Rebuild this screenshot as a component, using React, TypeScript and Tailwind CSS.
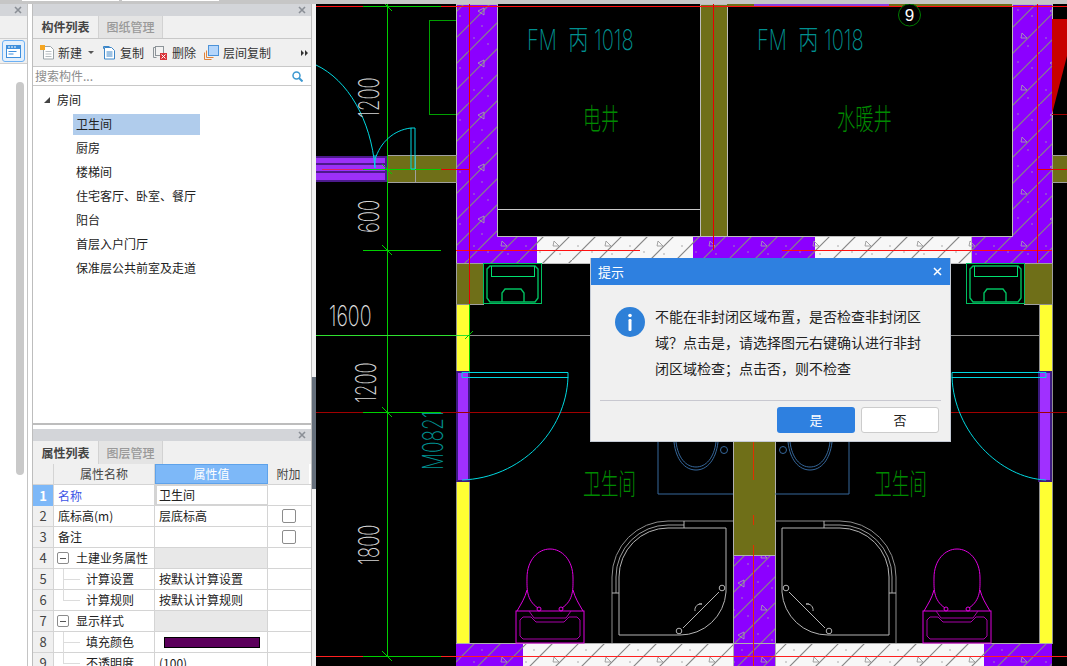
const uiFont = "font-['Noto_Sans_CJK_SC','Liberation_Sans',sans-serif]"

const treeItems = ['卫生间', '厨房', '楼梯间', '住宅客厅、卧室、餐厅', '阳台', '首层入户门厅', '保准层公共前室及走道']

function CloseX() {
  return (
    <svg width="8" height="8" viewBox="0 0 8 8" className="shrink-0">
      <path d="M1 1l6 6M7 1L1 7" stroke="#8a8f96" strokeWidth="1.6" fill="none" />
    </svg>
  )
}

function PanelBar() {
  return (
    <div className="h-[12px] bg-[#d3d5d9] flex items-center justify-end pr-[5px] shrink-0">
      <CloseX />
    </div>
  )
}

function NewIcon() {
  return (
    <svg width="16" height="15" viewBox="0 0 16 15" className="shrink-0">
      <path d="M3.5 1.5h7l3 3v9.5h-10z" fill="#fff" stroke="#9aa3a8" />
      <path d="M5.5 6.5h6M5.5 9h6M5.5 11.5h6" stroke="#b8bec2" />
      <rect x="0" y="0" width="5" height="5" fill="#f5a623" />
    </svg>
  )
}

function CopyIcon() {
  return (
    <svg width="14" height="15" viewBox="0 0 14 15" className="shrink-0">
      <path d="M1.5 3.5h2M1.5 3.5v-2h6" stroke="#3c86c8" fill="none" />
      <path d="M2.5 2.5h7l3 3v8.5h-10z" fill="#fff" stroke="#3c86c8" />
      <path d="M4.5 7h6M4.5 9h6M4.5 11h6" stroke="#3c86c8" />
    </svg>
  )
}

function DeleteIcon() {
  return (
    <svg width="14" height="14" viewBox="0 0 14 14" className="shrink-0">
      <path d="M3.5 1.5h-3v10h3" fill="none" stroke="#8d9499" />
      <rect x="2.5" y="0.5" width="8" height="9" fill="#f2f2f2" stroke="#8d9499" />
      <rect x="7" y="7" width="7" height="7" fill="#d9343a" />
      <path d="M8.5 8.5l4 4M12.5 8.5l-4 4" stroke="#fff" />
    </svg>
  )
}

function FloorCopyIcon() {
  return (
    <svg width="15" height="15" viewBox="0 0 15 15" className="shrink-0">
      <path d="M0.5 7.5v7h7" fill="none" stroke="#e0833a" />
      <path d="M2.5 5.5v7h7" fill="none" stroke="#e0833a" />
      <rect x="4.5" y="0.5" width="10" height="10" fill="#b5d6fb" stroke="#4d93d8" />
    </svg>
  )
}

function LeftStrip() {
  return (
    <div className="w-[28px] shrink-0 flex flex-col bg-white border-r border-[#c4c4c4] relative">
      <PanelBar />
      <div className="h-[23px] bg-[#f0f0f0] border-b border-[#cfcfcf] shrink-0" />
      <div className="h-[25px] bg-[#f0f0f0] border-b border-[#cfcfcf] shrink-0 flex items-center justify-end pr-[2px]">
        <div className="w-[23px] h-[22px] rounded-[3px] border border-[#6cb0f4] bg-[#e4f0fc] flex items-center justify-center">
          <svg width="15" height="13" viewBox="0 0 15 13">
            <rect x="0" y="0" width="15" height="13" fill="#3f8fdc" />
            <rect x="1" y="4" width="13" height="8" fill="#fff" />
            <path d="M2 2h2M5 2h2M8 2h2" stroke="#fff" />
            <path d="M2.5 6.5h8M2.5 9h5" stroke="#3f8fdc" />
          </svg>
        </div>
      </div>
      <div className="mt-[18px] ml-[16px] w-[8px] h-[393px] rounded-[4px] bg-[#c9c9c9]" />
    </div>
  )
}

function ComponentPanel() {
  return (
    <div className="h-[421px] flex flex-col shrink-0 border-b-2 border-[#bdbdbd]">
      <PanelBar />
      <div className="h-[23px] flex bg-[#f0f0f0] border-b border-[#c8c8c8] shrink-0 text-[12px]">
        <div className="w-[65px] flex items-center justify-center font-bold text-[#444]">构件列表</div>
        <div className="w-[65px] flex items-center justify-center bg-[#e4e4e4] text-[#999] font-medium border-x border-[#d2d2d2]">图纸管理</div>
      </div>
      <div className="h-[28px] flex items-center bg-[#f0f0f0] border-b border-[#c8c8c8] shrink-0 text-[12px] text-[#333] pl-[7px]">
        <NewIcon />
        <span className="ml-[2px]">新建</span>
        <span className="ml-[6px] w-0 h-0 border-x-[3px] border-x-transparent border-t-[3px] border-t-[#555]" />
        <span className="ml-[8px]"><CopyIcon /></span>
        <span className="ml-[4px]">复制</span>
        <span className="ml-[9px]"><DeleteIcon /></span>
        <span className="ml-[5px]">删除</span>
        <span className="ml-[8px]"><FloorCopyIcon /></span>
        <span className="ml-[4px]">层间复制</span>
        <svg width="7" height="6" viewBox="0 0 7 6" className="ml-[30px]">
          <path d="M0 0l3 3-3 3zM4 0l3 3-3 3z" fill="#333" />
        </svg>
      </div>
      <div className="h-[19px] flex items-center bg-white border-b border-[#c8c8c8] shrink-0 text-[12px] text-[#8c8c8c] pl-[2px] pr-[8px] justify-between">
        <span>搜索构件...</span>
        <svg width="11" height="11" viewBox="0 0 11 11">
          <circle cx="4.5" cy="4.5" r="3.5" fill="none" stroke="#3d98d0" strokeWidth="1.5" />
          <path d="M7 7l3.5 3.5" stroke="#3d98d0" strokeWidth="2" />
        </svg>
      </div>
      <div className="flex-1 bg-white text-[12px] text-[#222] relative pt-[2px]">
        <div className="h-[24px] flex items-center pl-[11px]">
          <span className="w-0 h-0 border-l-[6px] border-l-transparent border-b-[6px] border-b-[#444]" />
          <span className="ml-[7px]">房间</span>
        </div>
        {treeItems.map((name, i) => (
          <div key={name} className="h-[24px] flex items-center pl-[40px]">
            <span className={`h-[21px] flex items-center ${i === 0 ? 'w-[127px] bg-[#b0ccec]' : ''} pl-[3px]`}>{name}</span>
          </div>
        ))}
      </div>
    </div>
  )
}

const rows = [
  { n: 1, name: '名称', value: '卫生间', kind: 'first' },
  { n: 2, name: '底标高(m)', value: '层底标高', check: true },
  { n: 3, name: '备注', value: '', check: true },
  { n: 4, name: '土建业务属性', kind: 'group' },
  { n: 5, name: '计算设置', value: '按默认计算设置', kind: 'child' },
  { n: 6, name: '计算规则', value: '按默认计算规则', kind: 'child' },
  { n: 7, name: '显示样式', kind: 'group' },
  { n: 8, name: '填充颜色', kind: 'swatch' },
  { n: 9, name: '不透明度', value: '(100)', kind: 'last' },
]

function TableRow({ row }: { row: (typeof rows)[number] }) {
  const isGroup = row.kind === 'group'
  const isChild = row.kind === 'child' || row.kind === 'swatch' || row.kind === 'last'
  return (
    <div className="grid grid-cols-[21px_101px_113px_41px] h-[21px] shrink-0 border-b border-[#d4d4d4] text-[12px] text-[#222]">
      <div className={`flex items-center justify-center border-r border-[#d4d4d4] text-[13px] ${row.n === 1 ? 'bg-[#7db8f8] text-white font-bold' : 'bg-[#f0f0f0] text-[#444]'}`}>{row.n}</div>
      <div className="flex items-center border-r border-[#d4d4d4] relative">
        {isGroup && (
          <span className="absolute left-[3px] top-[4px] w-[12px] h-[12px] rounded-[2px] border border-[#8c8c8c] bg-white flex items-center justify-center">
            <span className="w-[6px] h-px bg-[#555]" />
          </span>
        )}
        {isChild && (
          <>
            <span className={`absolute left-[9px] top-0 w-px bg-[#dcdcdc] ${row.n === 6 || row.kind === 'last' ? 'h-[11px]' : 'h-[21px]'}`} />
            <span className="absolute left-[9px] top-[10px] w-[17px] h-px bg-[#dcdcdc]" />
          </>
        )}
        <span className={`${isGroup ? 'ml-[22px]' : isChild ? 'ml-[32px]' : 'ml-[4px]'} ${row.n === 1 ? 'text-[#3d55e6]' : ''}`}>{row.name}</span>
      </div>
      <div className={`flex items-center border-r border-[#d4d4d4] ${isGroup ? 'bg-[#e8e8e8]' : ''} ${row.n === 1 ? 'pl-[2px] border-2 border-[#808080] bg-white -mt-px h-[22px]' : 'pl-[4px]'}`}>
        {row.kind === 'swatch' ? <span className="ml-[5px] w-[96px] h-[11px] bg-[#5c005c] border border-black" /> : row.value}
      </div>
      <div className="flex items-center justify-center">
        {row.check && <span className="w-[14px] h-[14px] rounded-[2px] border border-[#8c8c8c] bg-white" />}
      </div>
    </div>
  )
}

function PropertyPanel() {
  return (
    <div className="flex-1 mt-[4px] flex flex-col overflow-hidden">
      <PanelBar />
      <div className="h-[23px] flex bg-[#f0f0f0] shrink-0 text-[12px]">
        <div className="w-[65px] flex items-center justify-center font-bold text-[#444]">属性列表</div>
        <div className="w-[65px] flex items-center justify-center bg-[#e4e4e4] text-[#999] font-medium border-x border-[#d2d2d2]">图层管理</div>
      </div>
      <div className="grid grid-cols-[21px_101px_113px_41px] h-[21px] shrink-0 text-[12px] text-[#444] border-b border-[#d4d4d4]">
        <div className="bg-[#f0f0f0] border-r border-[#d4d4d4]" />
        <div className="bg-[#f0f0f0] border-r border-[#d4d4d4] flex items-center justify-center">属性名称</div>
        <div className="bg-[#7db8f8] text-white border border-[#5ea2ea] flex items-center justify-center">属性值</div>
        <div className="bg-[#f0f0f0] flex items-center justify-center">附加</div>
      </div>
      {rows.map(row => <TableRow key={row.n} row={row} />)}
    </div>
  )
}

function CadDefs() {
  const marks = (c: string) => (
    <g shapeRendering="geometricPrecision">
      <path d="M-2 54L54 -2" stroke="#858585" strokeWidth="1.2" />
      <path d="M-2 28L28 -2M24 54L54 24" stroke="#858585" strokeWidth="1.2" />
      <path d="M10 11l6-3v7z" fill="none" stroke={c} strokeWidth="0.8" />
      <path d="M34 33l5 5h-6z" fill="none" stroke={c} strokeWidth="0.8" />
      <circle cx="30" cy="10" r="0.7" fill={c} />
      <circle cx="6" cy="38" r="0.7" fill={c} />
      <circle cx="44" cy="16" r="0.7" fill={c} />
      <circle cx="20" cy="44" r="0.7" fill={c} />
      <circle cx="14" cy="26" r="0.7" fill={c} />
      <circle cx="40" cy="46" r="0.7" fill={c} />
    </g>
  )
  return (
    <defs>
      <pattern id="hatchPurple" width="52" height="52" patternUnits="userSpaceOnUse">
        <rect width="52" height="52" fill="#8c00ff" />
        {marks('#a9a9a9')}
      </pattern>
      <pattern id="hatchWhite" width="52" height="52" patternUnits="userSpaceOnUse">
        <rect width="52" height="52" fill="#f7f7f7" />
        {marks('#8f8f8f')}
      </pattern>
    </defs>
  )
}

function CadLabel({ x, y, text, size, sx, color, rotate }: { x: number; y: number; text: string; size: number; sx: number; color: string; rotate?: boolean }) {
  return (
    <text
      transform={`translate(${x} ${y}) ${rotate ? 'rotate(-90)' : ''} scale(${sx} 1)`}
      fontSize={size}
      fill={color}
      fontFamily="Inter, 'Liberation Sans', 'Noto Sans CJK SC', sans-serif"
      fontWeight={200}
      className="whitespace-pre"
    >
      {text}
    </text>
  )
}

function CjkLabel({ x, y, text, size, sx }: { x: number; y: number; text: string; size: number; sx: number }) {
  return (
    <text
      transform={`translate(${x} ${y}) scale(${sx} 1)`}
      fontSize={size}
      fill="#008a00"
      fontFamily="'Noto Sans CJK SC', sans-serif"
      fontWeight={200}
    >
      {text}
    </text>
  )
}

function Shower({ mirror }: { mirror?: boolean }) {
  return (
    <g transform={mirror ? 'translate(1508 0) scale(-1 1)' : undefined} fill="none" stroke="#b4b4b4" strokeWidth="1" shapeRendering="geometricPrecision">
      <path d="M612 643V577A56 56 0 0 1 668 521H733" stroke="#8e8e8e" />
      <path d="M616 593V577A52 52 0 0 1 668 525H684" stroke="#9a9a9a" />
      <path d="M619 635V577A49 49 0 0 1 668 528H726V592A46 46 0 0 1 680 635Z" />
      <path d="M612 593H619M684 521V528M719 592L683 628" />
      <circle cx="722" cy="588" r="2.8" />
      <circle cx="679" cy="631" r="2.8" />
      <path d="M695 611A6 6 0 0 1 702 604L699 604" />
    </g>
  )
}

function Toilet({ cx }: { cx: number }) {
  return (
    <g transform={`translate(${cx} 0)`} fill="none" stroke="#e000e0" strokeWidth="1" shapeRendering="geometricPrecision">
      <path d="M-12 608C-24 600 -23 588 -23 578C-23 560 -12 549 0 549C12 549 23 560 23 578C23 588 24 600 12 608" />
      <path d="M-23 590C-25 598 -29 604 -33 611M23 590C25 598 29 604 33 611" />
      <rect x="-34" y="611" width="68" height="32" />
      <path d="M-21 611L-16 618H16L21 611M-27 617H-19L-14 622H14L19 617H27L30 620V636L27 639H-27L-30 636V620Z" stroke="#a800a8" />
      <circle cx="-11" cy="609" r="2" />
      <circle cx="11" cy="609" r="2" />
    </g>
  )
}

function Sink({ x, mirror }: { x: number; mirror?: boolean }) {
  return (
    <g transform={mirror ? `translate(${x + 59} 263) scale(-1 1)` : `translate(${x} 263)`} fill="none" stroke="#00c060" strokeWidth="1">
      <rect x="0.5" y="0.5" width="58" height="40" />
      <path d="M4 6L7 3H52L55 6V35L52 39H7L4 35Z" strokeWidth="1.4" shapeRendering="geometricPrecision" />
      <path d="M8 3V13H51V3" stroke="#00e070" />
      <path d="M19 39V30L22 26H38L41 30V39" strokeWidth="1.4" shapeRendering="geometricPrecision" />
    </g>
  )
}

function CadDrawing() {
  const ticks = [6, 169, 250, 412, 656]
  const hatchPurple = 'url(#hatchPurple)'
  const hatchWhite = 'url(#hatchWhite)'
  return (
    <svg width="751" height="666" viewBox="316 0 751 666" className="block" shapeRendering="crispEdges">
      <CadDefs />
      <rect x="316" y="0" width="751" height="666" fill="#000" />

      {/* walls */}
      <path d="M456 4H497V236H537V263H456Z" fill={hatchPurple} stroke="#bdbdbd" />
      <path d="M1012 4H1052V263H971V236H1012Z" fill={hatchPurple} stroke="#bdbdbd" />
      <rect x="537" y="236" width="156" height="27" fill={hatchWhite} />
      <rect x="693" y="236" width="122" height="27" fill={hatchPurple} />
      <rect x="815" y="236" width="156" height="27" fill={hatchWhite} />
      <path d="M537 263H971M537 236H1012" stroke="#bdbdbd" />
      <rect x="700" y="4" width="27" height="232" fill="#6f6f18" stroke="#bdbdbd" />
      <rect x="727" y="4" width="285" height="2" fill="#6f6f18" />
      <rect x="754" y="4" width="135" height="2" fill="#8c40e0" />
      <path d="M497 209H700M727 6H1012M497 6H700" stroke="#c8c8c8" />

      {/* left stub */}
      <rect x="387" y="155" width="69" height="27" fill="#6f6f18" stroke="#a0a0a0" />
      <path d="M415 155V182" stroke="#a0a0a0" />
      <rect x="316" y="156" width="71" height="26" fill="#4c1a8c" />
      <rect x="316" y="158" width="69" height="22" fill="#9c30f8" />
      <path d="M316 164H385M316 172H385" stroke="#4c1a8c" strokeWidth="1.5" />
      <path d="M456 20H429V114H456" stroke="#00a000" fill="none" strokeWidth="1" />

      {/* lower walls and doors */}
      <rect x="456" y="263" width="27" height="41" fill="#6f6f18" stroke="#a0a0a0" />
      <rect x="1024" y="263" width="28" height="41" fill="#6f6f18" stroke="#a0a0a0" />
      <rect x="456" y="304" width="13" height="339" fill="#ffff33" stroke="#909090" />
      <rect x="1039" y="304" width="13" height="339" fill="#ffff33" stroke="#909090" />
      <rect x="457" y="372" width="12" height="109" fill="#a030ff" stroke="#3c1a80" strokeWidth="2" />
      <rect x="1039" y="372" width="12" height="109" fill="#a030ff" stroke="#3c1a80" strokeWidth="2" />
      <rect x="1052" y="155" width="15" height="27" fill="#6f6f18" stroke="#a0a0a0" />

      {/* bottom band */}
      <rect x="456" y="643" width="67" height="24" fill={hatchPurple} />
      <rect x="523" y="643" width="210" height="24" fill={hatchWhite} />
      <rect x="775" y="643" width="209" height="24" fill={hatchWhite} />
      <rect x="984" y="643" width="68" height="24" fill={hatchPurple} />
      <rect x="733" y="440" width="42" height="115" fill="#6f6f18" />
      <rect x="733" y="555" width="42" height="112" fill={hatchPurple} />
      <path d="M733 440V667M775 440V667M733 555H775M456 643H1052" stroke="#b0b0b0" />

      {/* red axes */}
      <path d="M316 6H1067M456 250H640M782 250H1052" stroke="#ff1010" />
      <path d="M316 656H1067" stroke="#ff2020" />
      <path d="M316 412H1067" stroke="#a00000" />
      <path d="M469 4V304M713 4V250M1037 4V263M1037 169H1067M441 169H469" stroke="#e80000" />
      <path d="M322 169H363" stroke="#e0206a" />
      <path d="M753 440V480M753 515V525M753 545V667" stroke="#e03000" />

      {/* dimensions */}
      <path d="M387 4V656M469 304V372" stroke="#00d000" />
      <path d="M363 6H441M363 169H441M363 250H441M363 412H441M363 656H441" stroke="#00d000" />
      <path d="M316 335H469" stroke="#30e030" />
      <path d="M470 335H590M949 335H1040" stroke="#8a8a8a" />
      <g shapeRendering="geometricPrecision">
        {ticks.map(y => <path key={y} d={`M382 ${y - 5}L392 ${y + 5}`} stroke="#00d000" />)}
        <path d="M465 339L473 331" stroke="#00d000" />
      </g>

      {/* door swings */}
      <g fill="none" stroke="#00d8e0" shapeRendering="geometricPrecision">
        <path d="M316 65C348 80 371 120 375 168V155" />
        <path d="M375 160C380 142 394 130 411 128H415V169H411V128" />
        <path d="M462 372.5H568V377.5H462ZM568 377C566 432 520 478 462 480" />
        <path d="M1046 372.5H952V377.5H1046ZM952 377C954 432 1000 478 1046 480" />
      </g>

      {/* fixtures */}
      <Sink x={483} />
      <Sink x={966} mirror />
      <g fill="none" stroke="#36689c" strokeWidth="1" shapeRendering="geometricPrecision">
        <path d="M658 442V494H733M849 442V494H775" />
        <path d="M674 442C676 460 685 470 696 470C707 470 716 460 718 442" />
        <path d="M676 442C678 458 686 467 696 467C706 467 714 458 716 442" />
        <path d="M788 442C790 460 799 470 810 470C821 470 830 460 832 442" />
        <path d="M790 442C792 458 800 467 810 467C820 467 828 458 830 442" />
        <circle cx="724" cy="450" r="3.5" />
        <circle cx="783" cy="450" r="3.5" />
      </g>
      <Shower />
      <Shower mirror />
      <Toilet cx={550} />
      <Toilet cx={957} />

      {/* bubble */}
      <circle cx="909.5" cy="15" r="11" fill="#000" stroke="#007a00" shapeRendering="geometricPrecision" />
      <text x="909.5" y="21" textAnchor="middle" fontSize="17" fill="#fff" fontFamily="'Liberation Sans', sans-serif">9</text>
      <path d="M1052 19H1067V56L1052 114Z" fill="#c80000" shapeRendering="geometricPrecision" />
      <path d="M1052 114H1067" stroke="#a00000" />

      {/* labels */}
      <CadLabel x={379} y={118} text="1200" size={28} sx={0.66} color="#d4d4d4" rotate />
      <CadLabel x={379} y={233} text="600" size={28} sx={0.66} color="#d4d4d4" rotate />
      <CadLabel x={329} y={326} text="1600" size={28} sx={0.7} color="#e0e0e0" />
      <CadLabel x={376} y={403} text="1200" size={28} sx={0.66} color="#d4d4d4" rotate />
      <CadLabel x={379} y={565} text="1800" size={28} sx={0.66} color="#d4d4d4" rotate />
      <CadLabel x={443} y={470} text="M0821" size={28} sx={0.68} color="#009090" rotate />
      <CadLabel x={527} y={50} text="FM  丙 1018" size={28} sx={0.72} color="#009090" />
      <CadLabel x={757} y={50} text="FM  丙 1018" size={28} sx={0.72} color="#009090" />
      <CjkLabel x={583} y={130} text="电井" size={29} sx={0.62} />
      <CjkLabel x={837} y={130} text="水暖井" size={29} sx={0.63} />
      <CjkLabel x={583} y={495} text="卫生间" size={29} sx={0.61} />
      <CjkLabel x={874} y={495} text="卫生间" size={29} sx={0.61} />
    </svg>
  )
}

function Dialog() {
  return (
    <div className="absolute left-[590px] top-[258px] w-[361px] h-[184px] bg-[#f0f0f0] border-x border-b border-[#c4cad4] flex flex-col">
      <div className="h-[27px] bg-[#2e80e0] flex items-center justify-between pl-[7px] pr-[8px] text-[13px] text-white shrink-0">
        <span>提示</span>
        <svg width="9" height="9" viewBox="0 0 9 9">
          <path d="M1 1l7 7M8 1L1 8" stroke="#fff" strokeWidth="1.5" />
        </svg>
      </div>
      <div className="flex pl-[15px] pt-[18px] h-[116px] border-b border-[#c8c8d0] mx-[9px] shrink-0">
        <svg width="30" height="30" viewBox="0 0 30 30" className="shrink-0 mt-[4px]">
          <circle cx="15" cy="15" r="15" fill="#2e80d8" />
          <circle cx="15" cy="8.5" r="1.8" fill="#fff" />
          <rect x="13.5" y="12" width="3" height="12" rx="1.2" fill="#fff" />
        </svg>
        <div className="ml-[10px] text-[14px] leading-[26px] text-[#222] whitespace-nowrap">
          <div>不能在非封闭区域布置，是否检查非封闭区</div>
          <div>域？点击是，请选择图元右键确认进行非封</div>
          <div>闭区域检查；点击否，则不检查</div>
        </div>
      </div>
      <div className="flex justify-end gap-[6px] pr-[11px] pt-[6px] text-[13px]">
        <div className="w-[78px] h-[26px] rounded-[3px] bg-[#2e80e0] text-white flex items-center justify-center">是</div>
        <div className="w-[78px] h-[26px] rounded-[3px] bg-white border border-[#ccc] text-[#222] flex items-center justify-center">否</div>
      </div>
    </div>
  )
}

export default function App() {
  return (
    <div className={`w-[1067px] h-[666px] relative overflow-hidden flex flex-col bg-white ${uiFont}`}>
      <div className="h-[4px] bg-[#c6c6c6] shrink-0 flex pl-[22px] gap-[3px]">
        <div className="w-[97px] h-[1px] bg-white" />
        <div className="w-[97px] h-[1px] bg-white" />
      </div>
      <div className="flex-1 flex min-h-0">
        <LeftStrip />
        <div className="w-[4px] shrink-0" />
        <div className="w-[280px] shrink-0 flex flex-col border-x border-[#bdbdbd]">
          <ComponentPanel />
          <PropertyPanel />
        </div>
        <div className="w-[4px] shrink-0 bg-[#f2f2f2] relative">
          <div className="absolute left-0 top-[373px] w-[4px] h-[112px] bg-[#66707c]" />
        </div>
        <div className="-mt-[4px] shrink-0 h-[666px] relative">
          <div className="absolute left-0 top-0 w-full h-[4px] bg-[#c6c6c6] z-10" />
          <CadDrawing />
        </div>
      </div>
      <Dialog />
    </div>
  )
}
